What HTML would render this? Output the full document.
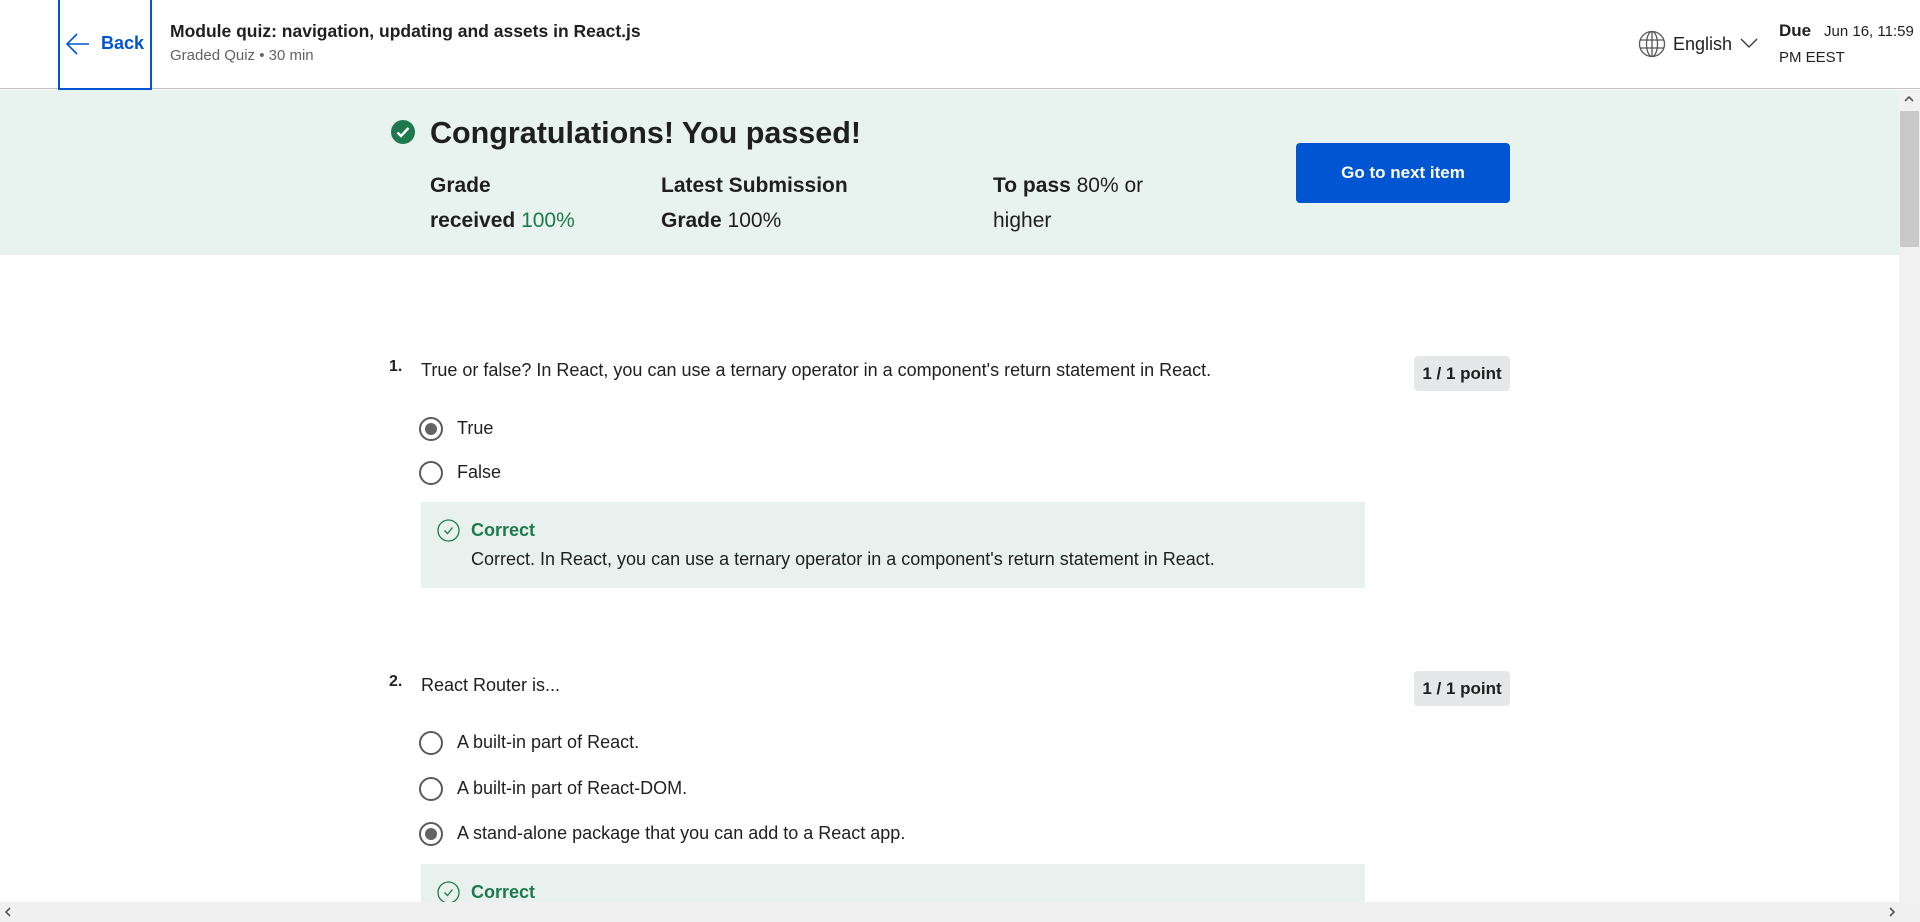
<!DOCTYPE html>
<html><head><meta charset="utf-8"><style>
*{margin:0;padding:0;box-sizing:border-box}
body{width:1920px;height:922px;overflow:hidden;background:#fff;font-family:"Liberation Sans",sans-serif;color:#1f1f1f;position:relative}
.a{position:absolute;white-space:nowrap}
.radio{position:absolute;width:24px;height:24px;border:2px solid #5b5b5b;border-radius:50%}
.radio.on::after{content:"";position:absolute;left:4px;top:4px;width:12px;height:12px;border-radius:50%;background:#636363}
.badge{position:absolute;background:#e5e7e8;border-radius:4px;font-weight:bold;font-size:17px;line-height:35px;text-align:center;width:96px}
.corr{position:absolute;background:#e8f1ee;left:421px;width:944px}
</style></head><body>
<div class="a" style="left:0;top:0;width:1920px;height:89px;border-bottom:1px solid #c4c4c4"></div>
<div class="a" style="left:58px;top:0;width:94px;height:90px;border:2px solid #0056d2;border-top:none"></div>
<svg class="a" style="left:66px;top:33px" width="24" height="22" viewBox="0 0 24 22"><path d="M11 1L1 11l10 10M1 11h22" fill="none" stroke="#0056d2" stroke-width="1.6"/></svg>
<div class="a" style="left:101px;top:33px;font-size:18px;font-weight:bold;color:#0056d2">Back</div>
<div class="a" style="left:170px;top:21px;font-size:17.5px;font-weight:bold">Module quiz: navigation, updating and assets in React.js</div>
<div class="a" style="left:170px;top:47px;font-size:15px;color:#636363">Graded Quiz • 30 min</div>
<svg class="a" style="left:1638px;top:30px" width="28" height="28" viewBox="0 0 28 28" fill="none" stroke="#555" stroke-width="1.3"><circle cx="14" cy="14" r="12.5"/><ellipse cx="14" cy="14" rx="5.5" ry="12.5"/><path d="M2 10h24M2 18h24M14 1.5v25"/></svg>
<div class="a" style="left:1673px;top:34px;font-size:18px">English</div>
<svg class="a" style="left:1740px;top:38px" width="18" height="11" viewBox="0 0 18 11"><path d="M1 1l8 8 8-8" fill="none" stroke="#333" stroke-width="1.3"/></svg>
<div class="a" style="left:1779px;top:21px;font-size:17px;font-weight:bold">Due</div>
<div class="a" style="left:1824px;top:23px;font-size:15px">Jun 16, 11:59</div>
<div class="a" style="left:1779px;top:49px;font-size:15px">PM EEST</div>
<div class="a" style="left:0;top:90px;width:1899px;height:165px;background:#e8f2ee"></div>
<svg class="a" style="left:391px;top:120px" width="24" height="24" viewBox="0 0 24 24"><circle cx="12" cy="12" r="12" fill="#1e7a4c"/><path d="M6.5 12.5l3.5 3.5 7.5-8" fill="none" stroke="#fff" stroke-width="2.4"/></svg>
<div class="a" style="left:430px;top:116px;font-size:30.5px;font-weight:bold">Congratulations! You passed!</div>
<div class="a" style="left:430px;top:168px;font-size:21px;line-height:35px"><b>Grade</b><br><b>received</b> <span style="color:#1e7a4c">100%</span></div>
<div class="a" style="left:661px;top:168px;font-size:21px;line-height:35px"><b>Latest Submission</b><br><b>Grade</b> 100%</div>
<div class="a" style="left:993px;top:168px;font-size:21px;line-height:35px"><b>To pass</b> 80% or<br>higher</div>
<div class="a" style="left:1296px;top:143px;width:214px;height:60px;background:#0056d2;border-radius:4px;color:#fff;font-weight:bold;font-size:17px;line-height:60px;text-align:center">Go to next item</div>
<div class="a" style="left:389px;top:358px;font-size:16px;font-weight:bold">1.</div>
<div class="a" style="left:421px;top:360px;font-size:18px">True or false? In React, you can use a ternary operator in a component's return statement in React.</div>
<div class="badge" style="left:1414px;top:356px">1 / 1 point</div>
<div class="radio on" style="left:419px;top:417px"></div>
<div class="a" style="left:457px;top:418px;font-size:18px">True</div>
<div class="radio" style="left:419px;top:461px"></div>
<div class="a" style="left:457px;top:462px;font-size:18px">False</div>
<div class="corr" style="top:502px;height:86px"></div>
<svg class="a" style="left:437px;top:519px" width="23" height="23" viewBox="0 0 23 23" fill="none" stroke="#1e7a4c" stroke-width="1.3"><circle cx="11.5" cy="11.5" r="10.5"/><path d="M7.5 11.5l3 3 5-6"/></svg>
<div class="a" style="left:471px;top:520px;font-size:18px;font-weight:bold;color:#1e7a4c">Correct</div>
<div class="a" style="left:471px;top:549px;font-size:18px">Correct. In React, you can use a ternary operator in a component's return statement in React.</div>
<div class="a" style="left:389px;top:673px;font-size:16px;font-weight:bold">2.</div>
<div class="a" style="left:421px;top:675px;font-size:18px">React Router is...</div>
<div class="badge" style="left:1414px;top:671px">1 / 1 point</div>
<div class="radio" style="left:419px;top:731px"></div>
<div class="a" style="left:457px;top:732px;font-size:18px">A built-in part of React.</div>
<div class="radio" style="left:419px;top:777px"></div>
<div class="a" style="left:457px;top:778px;font-size:18px">A built-in part of React-DOM.</div>
<div class="radio on" style="left:419px;top:822px"></div>
<div class="a" style="left:457px;top:823px;font-size:18px">A stand-alone package that you can add to a React app.</div>
<div class="corr" style="top:864px;height:40px"></div>
<svg class="a" style="left:437px;top:881px" width="23" height="23" viewBox="0 0 23 23" fill="none" stroke="#1e7a4c" stroke-width="1.3"><circle cx="11.5" cy="11.5" r="10.5"/><path d="M7.5 11.5l3 3 5-6"/></svg>
<div class="a" style="left:471px;top:882px;font-size:18px;font-weight:bold;color:#1e7a4c">Correct</div>
<div class="a" style="left:1899px;top:90px;width:21px;height:812px;background:#f1f1f1"></div>
<div class="a" style="left:1900px;top:111px;width:19px;height:136px;background:#c9c9c9"></div>
<svg class="a" style="left:1903px;top:95px" width="12" height="8" viewBox="0 0 12 8"><path d="M2 6l4-4 4 4" fill="none" stroke="#555" stroke-width="1.6"/></svg>
<div class="a" style="left:0;top:902px;width:1920px;height:20px;background:#f0f0f0"></div>
<svg class="a" style="left:4px;top:906px" width="8" height="12" viewBox="0 0 8 12"><path d="M6 2L2 6l4 4" fill="none" stroke="#555" stroke-width="1.6"/></svg>
<svg class="a" style="left:1888px;top:906px" width="8" height="12" viewBox="0 0 8 12"><path d="M2 2l4 4-4 4" fill="none" stroke="#555" stroke-width="1.6"/></svg>
</body></html>
